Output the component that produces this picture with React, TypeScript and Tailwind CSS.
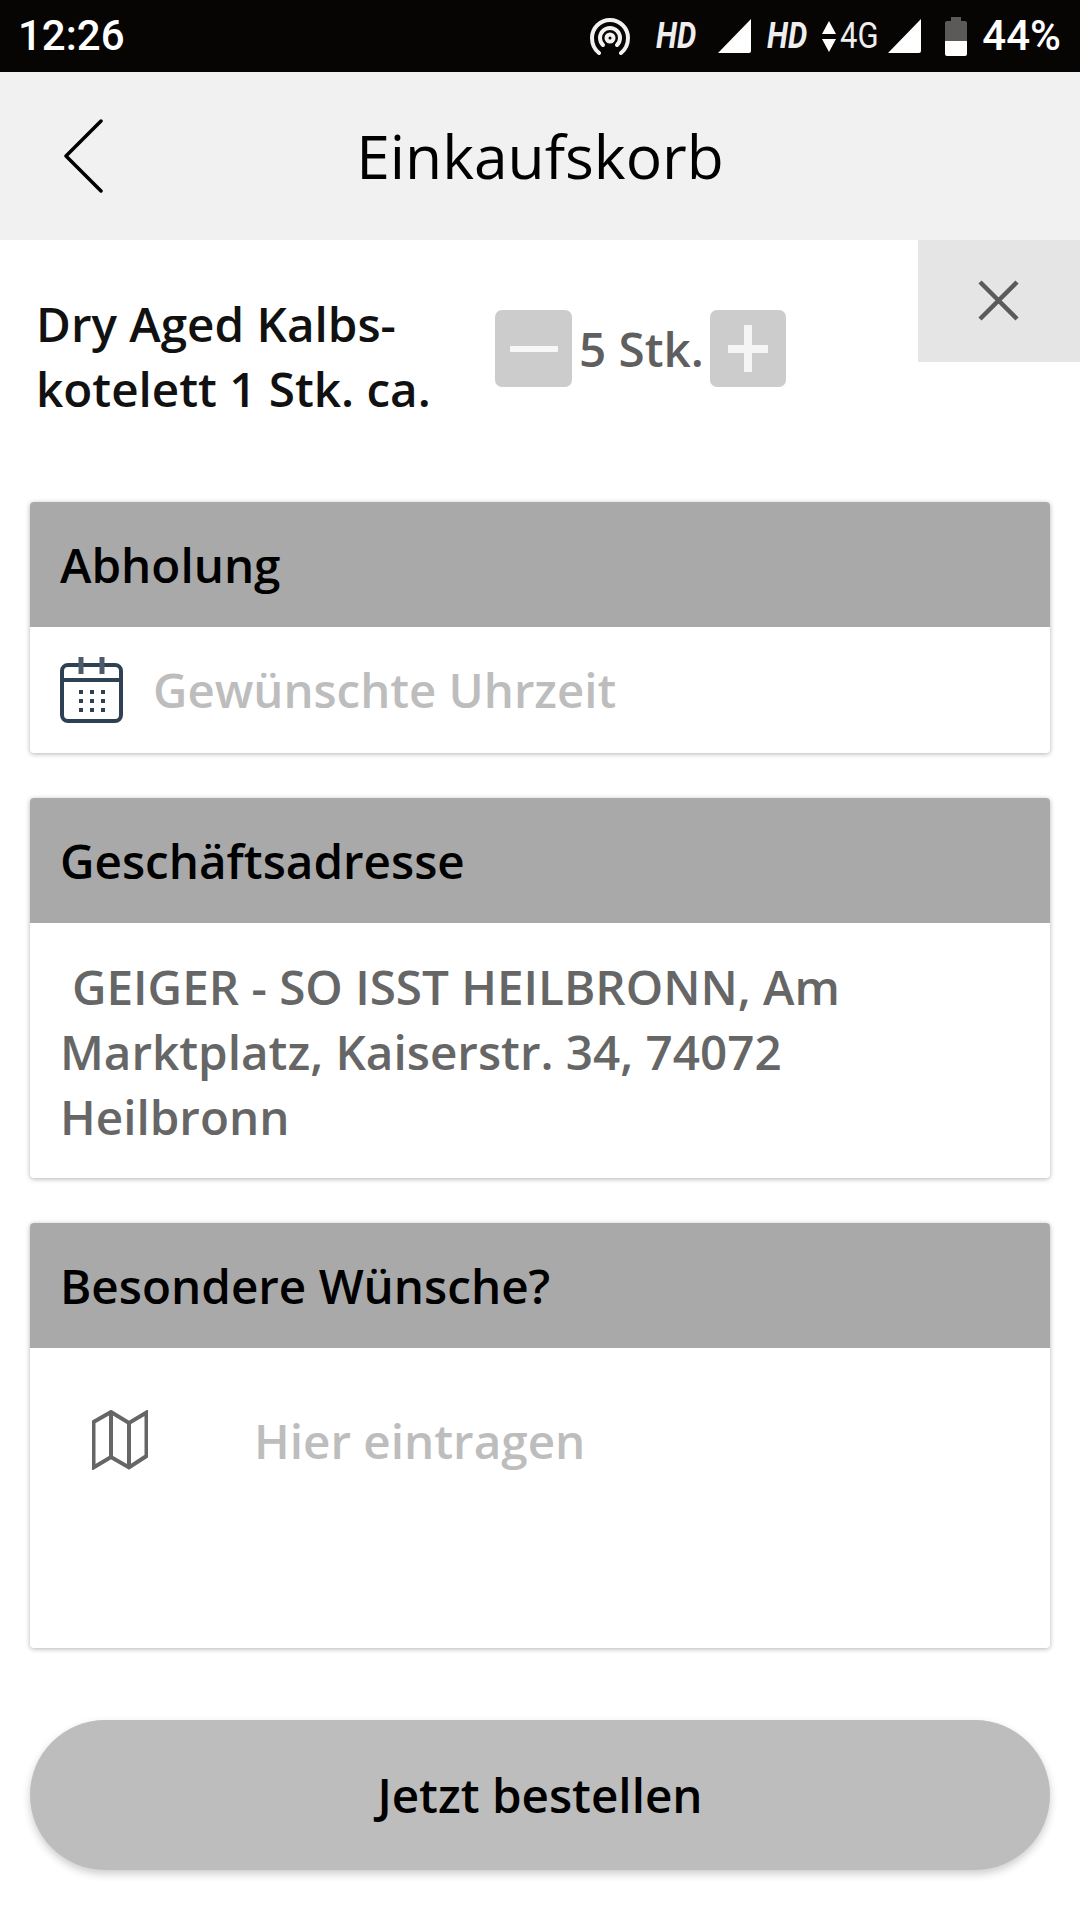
const font = "font-['Open_Sans',sans-serif]"

function StatusBar() {
  return (
    <div className="h-[72px] bg-[#070504] flex items-center justify-between pl-[18px] pr-[19px] text-white">
      <span className="font-['Roboto',sans-serif] font-medium text-[42px] leading-none">12:26</span>
      <div className="flex items-center h-full">
        <svg width="40" height="37" viewBox="0 0 40 37" fill="none" stroke="#f2f2f2" strokeWidth="4" strokeLinecap="round" className="mr-[26px]">
          <path d="M9 35C4 31 2 26 2 20a18 18 0 0 1 36 0c0 6-2 11-7 15" />
          <path d="M13 27c-2-2-3-4-3-7a10 10 0 0 1 20 0c0 3-1 5-3 7" />
          <circle cx="20" cy="20" r="3.5" />
        </svg>
        <span className="font-['Roboto',sans-serif] font-bold italic text-[36px] leading-none text-[#eee] w-[42px] whitespace-nowrap scale-x-[0.85] origin-left">HD</span>
        <svg width="34" height="34" viewBox="0 0 34 34" className="ml-[19px] mr-[16px]">
          <path d="M34 0v32a2 2 0 0 1-2 2H1z" fill="#fff" />
        </svg>
        <span className="font-['Roboto',sans-serif] font-bold italic text-[36px] leading-none text-[#eee] w-[42px] whitespace-nowrap scale-x-[0.85] origin-left">HD</span>
        <svg width="14" height="31" viewBox="0 0 14 31" className="ml-[13px] mr-[4px]">
          <path d="M7 0l7 13H0zM7 31L0 18h14z" fill="#fff" />
        </svg>
        <span className="font-['Roboto',sans-serif] text-[36px] leading-none text-[#eee] w-[38px] whitespace-nowrap scale-x-[0.86] origin-left">4G</span>
        <svg width="34" height="34" viewBox="0 0 34 34" className="ml-[9px] mr-[24px]">
          <path d="M34 0v32a2 2 0 0 1-2 2H1z" fill="#fff" />
        </svg>
        <svg width="22" height="39" viewBox="0 0 22 39" className="mr-[15px]">
          <path d="M6 0h10v4h4a2 2 0 0 1 2 2v22H0V6a2 2 0 0 1 2-2h4z" fill="#5c5a59" />
          <path d="M0 24h22v13a2 2 0 0 1-2 2H2a2 2 0 0 1-2-2z" fill="#fff" />
        </svg>
        <span className="font-['Roboto',sans-serif] font-medium text-[42px] leading-none">44%</span>
      </div>
    </div>
  )
}

function Card({ title, children }: { title: string; children: React.ReactNode }) {
  return (
    <div className="mx-[30px] rounded-[4px] bg-white shadow-[0_1px_5px_rgba(0,0,0,0.3)] overflow-hidden">
      <div className="h-[125px] bg-[#a9a9a9] flex items-center pl-[30px] font-semibold text-[47.6px] text-black">{title}</div>
      {children}
    </div>
  )
}

export default function App() {
  return (
    <div className={`w-[1080px] h-[1920px] bg-white overflow-hidden ${font}`}>
      <StatusBar />
      <div className="h-[168px] bg-[#f1f1f1] flex items-center justify-center relative">
        <svg width="40" height="74" viewBox="0 0 40 74" fill="none" stroke="#000" strokeWidth="3.5" strokeLinecap="round" strokeLinejoin="round" className="absolute left-[64px] top-[47px]">
          <path d="M37 2L2 37l35 35" />
        </svg>
        <span className="text-[60.5px] text-black leading-none">Einkaufskorb</span>
      </div>

      <div className="h-[262px] flex relative">
        <div className="pl-[36px] pt-[51px] w-[495px] font-semibold text-[47.6px] leading-[65px] text-[#111] whitespace-nowrap">
          Dry Aged Kalbs-<br />kotelett 1 Stk. ca.
        </div>
        <div className="flex items-start pt-[70px]">
          <div className="w-[77px] h-[77px] rounded-[7px] bg-[#cccccc] flex items-center justify-center">
            <div className="w-[48px] h-[6px] bg-[#f7f7f7] rounded-[1px]" />
          </div>
          <span className="font-semibold text-[47.6px] leading-[77px] text-[#5f5f5f] pl-[7px] pr-[6px]">5 Stk.</span>
          <div className="w-[76px] h-[77px] rounded-[7px] bg-[#cccccc] flex items-center justify-center relative">
            <div className="w-[40px] h-[8px] bg-[#f5f5f5]" />
            <div className="absolute w-[8px] h-[47px] bg-[#f5f5f5]" />
          </div>
        </div>
        <div className="absolute right-0 top-0 w-[162px] h-[122px] bg-[#e5e5e5] flex items-center justify-center pr-[2px] pb-[2px]">
          <svg width="41" height="41" viewBox="0 0 41 41" fill="none" stroke="#5a5a5a" strokeWidth="4.5">
            <path d="M2 2l37 37M39 2L2 39" />
          </svg>
        </div>
      </div>

      <Card title="Abholung">
        <div className="h-[126px] flex items-center pl-[30px]">
          <svg width="63" height="66" viewBox="0 0 63 66" fill="none" className="mr-[30px]">
            <rect x="2" y="8" width="59" height="56" rx="6" stroke="#2e4154" strokeWidth="4" />
            <path d="M2 23h59" stroke="#2e4154" strokeWidth="4" />
            <path d="M21 0v17M42 0v17" stroke="#4d5b69" strokeWidth="5" />
            <path d="M19 35h4M30 35h4M41 35h4M19 44h4M30 44h4M41 44h4M19 53h4M30 53h4M41 53h4" stroke="#2e4154" strokeWidth="4" />
          </svg>
          <span className="font-semibold text-[47.4px] text-[#bdbdbd]">Gewünschte Uhrzeit</span>
        </div>
      </Card>

      <div className="h-[45px]" />
      <Card title="Geschäftsadresse">
        <div className="pl-[30px] pr-[30px] pt-[31px] pb-[29px] font-semibold text-[47.6px] leading-[65px] text-[#666666] whitespace-nowrap">
          <span className="pl-[12px]">GEIGER - SO ISST HEILBRONN, Am</span><br />
          Marktplatz, Kaiserstr. 34, 74072<br />
          Heilbronn
        </div>
      </Card>

      <div className="h-[45px]" />
      <Card title="Besondere Wünsche?">
        <div className="h-[300px] flex items-start pl-[62px] pt-[60px]">
          <svg width="56" height="60" viewBox="0 0 56 60" fill="none" stroke="#666666" strokeWidth="4" className="mr-[106px] mt-[2px] shrink-0">
            <path d="M1.500 12L19 2l18 11 17.500-10.500V46L37 57.500 19 47 1.500 57.500zM19 2v45M37 13v44.500" />
          </svg>
          <span className="font-semibold text-[47.6px] leading-[65px] text-[#bdbdbd]">Hier eintragen</span>
        </div>
      </Card>

      <div className="mt-[72px] mx-[30px] h-[150px] rounded-[75px] bg-[#bdbdbd] shadow-[0_4px_8px_rgba(0,0,0,0.2)] flex items-center justify-center font-semibold text-[47.6px] text-black">
        Jetzt bestellen
      </div>
    </div>
  )
}
